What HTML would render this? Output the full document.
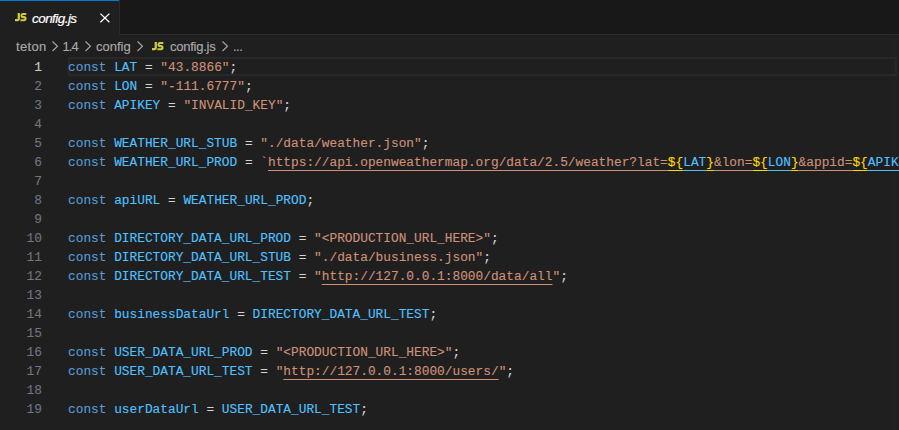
<!DOCTYPE html>
<html><head><meta charset="utf-8">
<style>
html,body{margin:0;padding:0;}
body{width:899px;height:430px;overflow:hidden;background:#1f1f1f;position:relative;font-family:"Liberation Sans",sans-serif;}
#tabbar{position:absolute;left:0;top:0;width:899px;height:35px;background:#181818;}
#tabbar .bb{position:absolute;left:119px;top:34px;width:780px;height:1px;background:#2b2b2b;}
#tab{position:absolute;left:0;top:0;width:119px;height:35px;background:#1f1f1f;border-right:1px solid #2b2b2b;}
#tab .top{position:absolute;left:0;top:0;width:119px;height:1px;background:#0078d4;}
.js{position:absolute;font-family:"Liberation Sans",sans-serif;font-weight:bold;color:#cbcb41;font-size:10px;letter-spacing:-0.3px;}
#tab .label{position:absolute;left:32px;top:10px;font-style:italic;color:#ffffff;font-size:13.5px;line-height:18px;letter-spacing:-0.55px;-webkit-text-stroke:0.2px currentColor;}
#tab .close{position:absolute;left:99px;top:12px;}
#crumbs{position:absolute;left:0;top:36px;height:22px;width:899px;color:#a9a9a9;font-size:13px;line-height:22px;-webkit-text-stroke:0.15px currentColor;}
#crumbs span{position:absolute;top:0;}
#crumbs svg{position:absolute;}
#code{position:absolute;left:0;top:58px;width:899px;font-family:"Liberation Mono",monospace;font-size:12.826px;-webkit-text-stroke:0.12px currentColor;}
.ln{position:absolute;left:0;width:42px;text-align:right;color:#6e7681;height:19px;line-height:19px;}
.ln.cur{color:#cccccc;}
.l{position:absolute;left:68px;height:19px;line-height:19px;white-space:pre;color:#d4d4d4;}
.curline{position:absolute;left:68px;top:-1px;width:825px;height:15px;border:2px solid #282828;border-right-color:#262626;}
.k{color:#569cd6}.c{color:#4fc1ff}.v{color:#4fc1ff}.s{color:#ce9178}.b{color:#ffd700}
.u{text-decoration:underline;text-underline-offset:4px;}
</style></head><body>
<div id="tabbar"><div class="bb"></div>
 <div id="tab"><div class="top"></div>
  <svg style="position:absolute;left:14.5px;top:12.6px" width="12" height="9" viewBox="0 0 12 9"><path d="M2.65,0 H4.9 V5.6 Q4.9,8.3 2.4,8.3 H0 V6.1 H2.1 Q2.65,6.1 2.65,5.5 Z" fill="#cbcb41"/><path d="M11.3,1.05 H7.6 Q6.5,1.05 6.5,2.5 Q6.5,4.1 8.2,4.1 H9 Q10.5,4.1 10.5,5.6 Q10.5,7.25 9,7.25 H5.4" stroke="#cbcb41" stroke-width="2.1" fill="none"/></svg>
  <span class="label">config.js</span>
  <svg class="close" width="12" height="12" viewBox="0 0 12 12"><path d="M1.4 1.6L10.4 10.2M10.4 1.6L1.4 10.2" stroke="#ffffff" stroke-width="1.3" fill="none"/></svg>
 </div>
</div>
<div id="crumbs">
 <span style="left:16px;letter-spacing:0.35px">teton</span>
 <svg style="left:51px;top:5px" width="8" height="11" viewBox="0 0 8 11"><path d="M1.5 0.5L6.5 5.25L1.5 10" stroke="#a9a9a9" stroke-width="1.1" fill="none"/></svg>
 <span style="left:62.6px;letter-spacing:-1px">1.4</span>
 <svg style="left:84px;top:5px" width="8" height="11" viewBox="0 0 8 11"><path d="M1.5 0.5L6.5 5.25L1.5 10" stroke="#a9a9a9" stroke-width="1.1" fill="none"/></svg>
 <span style="left:96px">config</span>
 <svg style="left:136px;top:5px" width="8" height="11" viewBox="0 0 8 11"><path d="M1.5 0.5L6.5 5.25L1.5 10" stroke="#a9a9a9" stroke-width="1.1" fill="none"/></svg>
 <svg style="position:absolute;left:152px;top:5.8px" width="12" height="9" viewBox="0 0 12 9"><path d="M2.65,0 H4.9 V5.6 Q4.9,8.3 2.4,8.3 H0 V6.1 H2.1 Q2.65,6.1 2.65,5.5 Z" fill="#cbcb41"/><path d="M11.3,1.05 H7.6 Q6.5,1.05 6.5,2.5 Q6.5,4.1 8.2,4.1 H9 Q10.5,4.1 10.5,5.6 Q10.5,7.25 9,7.25 H5.4" stroke="#cbcb41" stroke-width="2.1" fill="none"/></svg>
 <span style="left:170px;letter-spacing:-0.25px">config.js</span>
 <svg style="left:221px;top:5px" width="8" height="11" viewBox="0 0 8 11"><path d="M1.5 0.5L6.5 5.25L1.5 10" stroke="#a9a9a9" stroke-width="1.1" fill="none"/></svg>
 <span style="left:233px;letter-spacing:-0.5px">...</span>
</div>
<div id="code">
<div class="curline"></div>
<div class="ln cur" style="top:0px">1</div><div class="l" style="top:0px"><span class="k">const</span> <span class="c">LAT</span> = <span class="s">"43.8866"</span>;</div>
<div class="ln" style="top:19px">2</div><div class="l" style="top:19px"><span class="k">const</span> <span class="c">LON</span> = <span class="s">"-111.6777"</span>;</div>
<div class="ln" style="top:38px">3</div><div class="l" style="top:38px"><span class="k">const</span> <span class="c">APIKEY</span> = <span class="s">"INVALID_KEY"</span>;</div>
<div class="ln" style="top:57px">4</div>
<div class="ln" style="top:76px">5</div><div class="l" style="top:76px"><span class="k">const</span> <span class="c">WEATHER_URL_STUB</span> = <span class="s">"./data/weather.json"</span>;</div>
<div class="ln" style="top:95px">6</div><div class="l" style="top:95px"><span class="k">const</span> <span class="c">WEATHER_URL_PROD</span> = <span class="s">`</span><span class="s u">https://api.openweathermap.org/data/2.5/weather?lat=</span><span class="b u">${</span><span class="c u">LAT</span><span class="b u">}</span><span class="s u">&amp;lon=</span><span class="b u">${</span><span class="c u">LON</span><span class="b u">}</span><span class="s u">&amp;appid=</span><span class="b u">${</span><span class="c u">APIKEY</span><span class="b u">}</span><span class="s">`</span>;</div>
<div class="ln" style="top:114px">7</div>
<div class="ln" style="top:133px">8</div><div class="l" style="top:133px"><span class="k">const</span> <span class="v">apiURL</span> = <span class="c">WEATHER_URL_PROD</span>;</div>
<div class="ln" style="top:152px">9</div>
<div class="ln" style="top:171px">10</div><div class="l" style="top:171px"><span class="k">const</span> <span class="c">DIRECTORY_DATA_URL_PROD</span> = <span class="s">"&lt;PRODUCTION_URL_HERE&gt;"</span>;</div>
<div class="ln" style="top:190px">11</div><div class="l" style="top:190px"><span class="k">const</span> <span class="c">DIRECTORY_DATA_URL_STUB</span> = <span class="s">"./data/business.json"</span>;</div>
<div class="ln" style="top:209px">12</div><div class="l" style="top:209px"><span class="k">const</span> <span class="c">DIRECTORY_DATA_URL_TEST</span> = <span class="s">"<span class="u">http://127.0.0.1:8000/data/all</span>"</span>;</div>
<div class="ln" style="top:228px">13</div>
<div class="ln" style="top:247px">14</div><div class="l" style="top:247px"><span class="k">const</span> <span class="v">businessDataUrl</span> = <span class="c">DIRECTORY_DATA_URL_TEST</span>;</div>
<div class="ln" style="top:266px">15</div>
<div class="ln" style="top:285px">16</div><div class="l" style="top:285px"><span class="k">const</span> <span class="c">USER_DATA_URL_PROD</span> = <span class="s">"&lt;PRODUCTION_URL_HERE&gt;"</span>;</div>
<div class="ln" style="top:304px">17</div><div class="l" style="top:304px"><span class="k">const</span> <span class="c">USER_DATA_URL_TEST</span> = <span class="s">"<span class="u">http://127.0.0.1:8000/users/</span>"</span>;</div>
<div class="ln" style="top:323px">18</div>
<div class="ln" style="top:342px">19</div><div class="l" style="top:342px"><span class="k">const</span> <span class="v">userDataUrl</span> = <span class="c">USER_DATA_URL_TEST</span>;</div>
</div>
<div style="position:absolute;left:891px;top:35px;width:6px;height:395px;background:rgba(200,255,230,0.008)"></div>
</body></html>
